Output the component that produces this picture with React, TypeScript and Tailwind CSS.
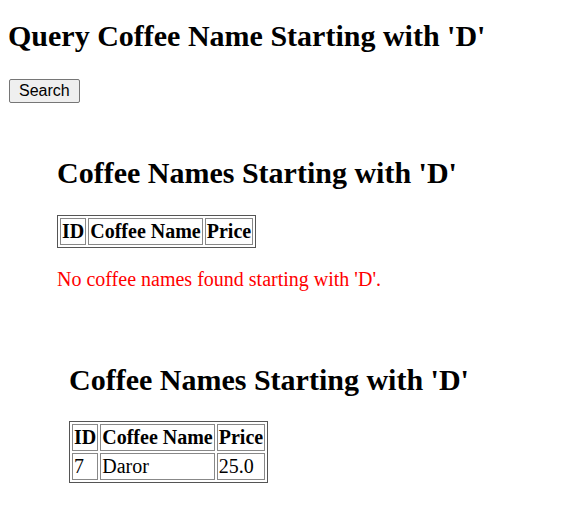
import React from 'react';

type Row = { id: number; name: string; price: string };

const CoffeeTable: React.FC<{ rows: Row[] }> = ({ rows }) => (
  <table className="border-separate border-spacing-[2px] border border-[#555]">
    <thead>
      <tr>
        <th className="border border-[#888] p-[1px] font-bold text-left">ID</th>
        <th className="border border-[#888] p-[1px] font-bold text-left">Coffee Name</th>
        <th className="border border-[#888] p-[1px] font-bold text-left">Price</th>
      </tr>
    </thead>
    <tbody>
      {rows.map((r) => (
        <tr key={r.id}>
          <td className="border border-[#888] p-[1px]">{r.id}</td>
          <td className="border border-[#888] p-[1px]">{r.name}</td>
          <td className="border border-[#888] p-[1px]">{r.price}</td>
        </tr>
      ))}
    </tbody>
  </table>
);

export default function App() {
  return (
    <div className="bg-white text-black min-h-[524px] px-2 font-['Liberation_Serif','Times_New_Roman',serif] text-[20px] leading-[23px]">
      <h1 className="text-[30px] font-bold leading-[35px] pt-[18px]">Query Coffee Name Starting with 'D'</h1>
      <button className="mt-[26px] ml-[1px] font-['Liberation_Sans',Arial,sans-serif] text-[16px] leading-[18px] px-[9px] py-[2px] border border-[#767676] bg-[#efefef] rounded-[2px]">
        Search
      </button>

      <div className="ml-[49px] mt-[52px]">
        <h1 className="text-[30px] font-bold leading-[35px]">Coffee Names Starting with 'D'</h1>
        <div className="mt-[25px]">
          <CoffeeTable rows={[]} />
        </div>
        <p className="mt-[20px] text-[#ff0000]">No coffee names found starting with 'D'.</p>
      </div>

      <div className="ml-[61px] mt-[71px]">
        <h1 className="text-[30px] font-bold leading-[35px]">Coffee Names Starting with 'D'</h1>
        <div className="mt-[24px]">
          <CoffeeTable rows={[{ id: 7, name: 'Daror', price: '25.0' }]} />
        </div>
      </div>
    </div>
  );
}
